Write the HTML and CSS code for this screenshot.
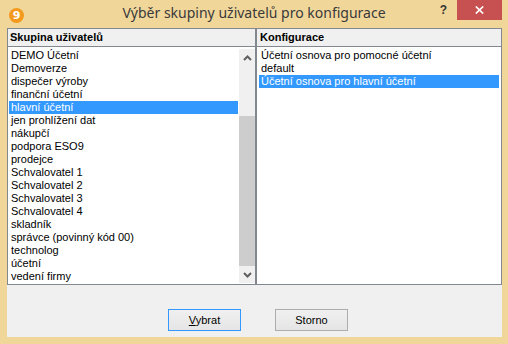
FILE: index.html
```html
<!DOCTYPE html>
<html lang="cs">
<head>
<meta charset="utf-8">
<title>Výběr skupiny uživatelů pro konfigurace</title>
<link rel="stylesheet" href="styles.css">
</head>
<body>
<div class="window">
  <div class="titlebar">
    <div class="tb-left">
      <span class="logo"><span class="logo-num">9</span></span>
    </div>
    <div class="title">Výběr skupiny uživatelů pro konfigurace</div>
    <div class="tb-right">
      <span class="help">?</span>
      <span class="close">
        <svg width="9" height="8" viewBox="0 0 9 8"><path d="M0.8 0.5 L8.2 7.5 M8.2 0.5 L0.8 7.5" stroke="#fff" stroke-width="1.7" fill="none"/></svg>
      </span>
    </div>
  </div>
  <div class="client">
    <div class="panes">
      <div class="pane pane-left">
        <div class="pane-head">Skupina uživatelů</div>
        <div class="pane-body">
          <div class="items">
            <div class="item">DEMO Účetní</div>
            <div class="item">Demoverze</div>
            <div class="item">dispečer výroby</div>
            <div class="item">finanční účetní</div>
            <div class="item selected">hlavní účetní</div>
            <div class="item">jen prohlížení dat</div>
            <div class="item">nákupčí</div>
            <div class="item">podpora ESO9</div>
            <div class="item">prodejce</div>
            <div class="item">Schvalovatel 1</div>
            <div class="item">Schvalovatel 2</div>
            <div class="item">Schvalovatel 3</div>
            <div class="item">Schvalovatel 4</div>
            <div class="item">skladník</div>
            <div class="item">správce (povinný kód 00)</div>
            <div class="item">technolog</div>
            <div class="item">účetní</div>
            <div class="item">vedení firmy</div>
          </div>
          <div class="scrollbar">
            <div class="sb-btn">
              <svg width="9" height="6" viewBox="0 0 9 6"><path d="M1 5 L4.5 1.5 L8 5" stroke="#606060" stroke-width="2" fill="none"/></svg>
            </div>
            <div class="sb-track-top"></div>
            <div class="sb-thumb"></div>
            <div class="sb-btn">
              <svg width="9" height="6" viewBox="0 0 9 6"><path d="M1 1 L4.5 4.5 L8 1" stroke="#606060" stroke-width="2" fill="none"/></svg>
            </div>
          </div>
        </div>
      </div>
      <div class="pane pane-right">
        <div class="pane-head">Konfigurace</div>
        <div class="pane-body">
          <div class="items">
            <div class="item">Účetní osnova pro pomocné účetní</div>
            <div class="item">default</div>
            <div class="item selected">Účetní osnova pro hlavní účetní</div>
          </div>
        </div>
      </div>
    </div>
    <div class="buttons">
      <button class="btn btn-default"><u>V</u>ybrat</button>
      <button class="btn">Storno</button>
    </div>
  </div>
</div>
</body>
</html>
```

FILE: styles.css
```css
* { box-sizing: border-box; }
html, body { margin: 0; padding: 0; }
body {
  width: 508px;
  height: 344px;
  background: #f1d69a;
  font-family: "Liberation Sans", Arial, sans-serif;
  font-size: 11px;
  color: #000;
  overflow: hidden;
}
.window {
  display: flex;
  flex-direction: column;
  width: 508px;
  height: 344px;
}
.titlebar {
  height: 28px;
  display: grid;
  grid-template-columns: 1fr auto 1fr;
  align-items: start;
}
.tb-left { display: flex; padding: 8px 0 0 9px; }
.logo {
  width: 15px;
  height: 15px;
  border-radius: 50%;
  background: #f39a1e;
  display: flex;
  align-items: center;
  justify-content: center;
}
.logo-num {
  color: #fff;
  font-family: "DejaVu Sans", sans-serif;
  font-weight: bold;
  font-size: 11px;
  line-height: 11px;
}
.title {
  font-family: "Noto Sans", "Open Sans", sans-serif;
  font-size: 14px;
  line-height: 20px;
  padding-top: 3px;
  color: #3a3a3a;
  white-space: nowrap;
}
.tb-right {
  display: flex;
  justify-content: flex-end;
  align-items: flex-start;
  padding-right: 6px;
}
.help {
  font-family: "Liberation Sans", sans-serif;
  font-weight: bold;
  font-size: 12px;
  line-height: 12px;
  color: #333;
  margin-top: 4px;
  margin-right: 10px;
}
.close {
  width: 45px;
  height: 20px;
  background: #c75050;
  display: flex;
  align-items: center;
  justify-content: center;
}
.client {
  flex: 1;
  margin: 0 6px 7px 7px;
  background: #f0f0f0;
  display: flex;
  flex-direction: column;
}
.panes {
  display: flex;
  height: 257px;
}
.pane {
  border: 1px solid #828790;
  display: flex;
  flex-direction: column;
}
.pane-left { width: 249px; }
.pane-right { width: 246px; }
.pane-head {
  height: 18px;
  line-height: 17px;
  border-bottom: 1px solid #828790;
  background: #f0f0f0;
  font-weight: bold;
  padding-left: 2px;
  white-space: nowrap;
}
.pane-right .pane-head { padding-left: 3px; }
.pane-body {
  flex: 1;
  background: #fff;
  display: flex;
  padding: 2px 0 1px 1px;
}
.pane-right .pane-body { padding-left: 2px; padding-right: 1px; }
.items {
  flex: 1;
  display: flex;
  flex-direction: column;
  padding-right: 1px;
}
.item {
  height: 13px;
  line-height: 13px;
  padding-left: 2px;
  white-space: nowrap;
}
.item.selected {
  background: #3399ff;
  color: #fff;
}
.scrollbar {
  width: 16px;
  display: flex;
  flex-direction: column;
  background: #f0f0f0;
}
.sb-btn {
  height: 17px;
  display: flex;
  align-items: center;
  justify-content: center;
}
.sb-track-top { height: 50px; }
.sb-thumb {
  flex: 1;
  background: #cdcdcd;
}
.buttons {
  display: flex;
  gap: 34px;
  padding-left: 161px;
  margin-top: 24px;
}
.btn {
  width: 73px;
  height: 22px;
  border: 1px solid #adadad;
  background: linear-gradient(#f0f0f0, #e5e5e5);
  font-family: "Liberation Sans", Arial, sans-serif;
  font-size: 11px;
  color: #000;
  padding: 0;
}
.btn-default { border-color: #3399ff; }
```
